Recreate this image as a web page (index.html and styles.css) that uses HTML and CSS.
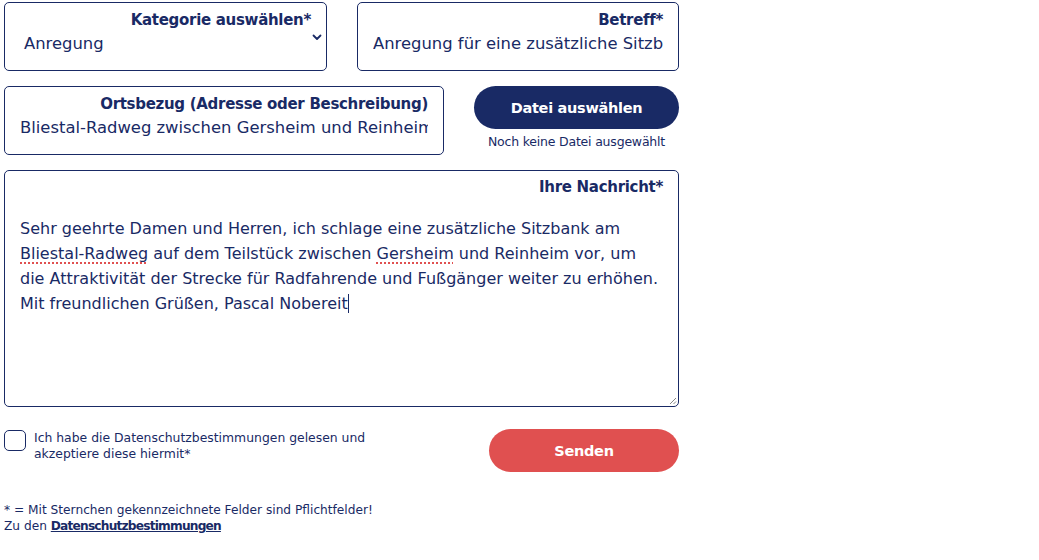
FILE: index.html
```html
<!DOCTYPE html>
<html lang="de">
<head>
<meta charset="utf-8">
<link rel="stylesheet" href="styles.css">
</head>
<body>
<form class="form">
  <div class="row-top">
    <div class="field field-select">
      <div class="label">Kategorie auswählen*</div>
      <div class="value">Anregung</div>
      <svg class="chev" width="10" height="7" viewBox="0 0 10 7"><path d="M1.5 1.5 L5 5 L8.5 1.5" fill="none" stroke="#192a65" stroke-width="1.8" stroke-linecap="round" stroke-linejoin="round"/></svg>
    </div>
    <div class="field">
      <div class="label">Betreff*</div>
      <div class="value clip">Anregung für eine zusätzliche Sitzbank am Bliestal-Radweg</div>
    </div>
  </div>
  <div class="row row-mid">
    <div class="field">
      <div class="label">Ortsbezug (Adresse oder Beschreibung)</div>
      <div class="value clip">Bliestal-Radweg zwischen Gersheim und Reinheim</div>
    </div>
    <div class="file">
      <button type="button" class="btn btn-navy">Datei auswählen</button>
      <div class="file-note">Noch keine Datei ausgewählt</div>
    </div>
  </div>
  <div class="field field-msg">
    <div class="label">Ihre Nachricht*</div>
    <div class="msg">Sehr geehrte Damen und Herren, ich schlage eine zusätzliche Sitzbank am <span class="spell">Bliestal-Radweg</span> auf dem Teilstück zwischen <span class="spell">Gersheim</span> und Reinheim vor, um die Attraktivität der Strecke für Radfahrende und Fußgänger weiter zu erhöhen. Mit freundlichen Grüßen, Pascal Nobereit<span class="caret"></span></div>
    <svg class="grip" width="8" height="8" viewBox="0 0 8 8"><path d="M7 1 L1 7 M7 4.5 L4.5 7" stroke="#888" stroke-width="1"/></svg>
  </div>
  <div class="row row-bottom">
    <label class="consent">
      <span class="box"></span>
      <span class="consent-text">Ich habe die Datenschutzbestimmungen gelesen und akzeptiere diese hiermit*</span>
    </label>
    <button type="button" class="btn btn-red">Senden</button>
  </div>
  <div class="foot">
    <div>* = Mit Sternchen gekennzeichnete Felder sind Pflichtfelder!</div>
    <div>Zu den <a class="foot-link" href="#">Datenschutzbestimmungen</a></div>
  </div>
</form>
</body>
</html>
```
FILE: styles.css
```css
* { box-sizing: border-box; }
body {
  margin: 0;
  background: #fff;
  color: #192a65;
  font-family: "DejaVu Sans", "Noto Sans", sans-serif;
}
.form {
  width: 679px;
  padding: 2px 0 0 4px;
}
.row { display: flex; }
.row-top {
  display: grid;
  grid-template-columns: 323px 322px;
  column-gap: 30px;
}
.row-top .field { min-width: 0; }
.field {
  position: relative;
  border: 1px solid #192a65;
  border-radius: 5px;
  height: 69px;
  padding: 6px 15px 0 15px;
  background: #fff;
}
.label {
  text-align: right;
  font-weight: bold;
  font-size: 15px;
  line-height: 22px;
  letter-spacing: -0.3px;
}
.value {
  font-size: 16.4px;
  line-height: 26px;
  white-space: nowrap;
}
.clip { overflow: hidden; }
.field-select { padding-left: 19px; }
.field-select .chev { position: absolute; right: 4px; top: 31px; }
.row-mid { margin-top: 15px; gap: 30px; align-items: flex-start; }
.row-mid .field { width: 440px; flex: none; }
.file { flex: 1; display: flex; flex-direction: column; align-items: center; }
.btn {
  border: 0;
  border-radius: 22px;
  height: 43px;
  color: #fff;
  font-family: inherit;
  font-weight: bold;
  font-size: 14.5px;
  letter-spacing: -0.3px;
  cursor: pointer;
}
.btn-navy { background: #192a65; width: 100%; }
.file-note { font-size: 12.5px; margin-top: 5px; letter-spacing: -0.2px; }
.field-msg {
  margin-top: 15px;
  height: 237px;
  padding-top: 5px;
}
.msg {
  margin-top: 18px;
  font-size: 16px;
  line-height: 25px;
}
.spell {
  text-decoration: underline dotted #e05050;
  text-decoration-thickness: 2px;
  text-underline-offset: 3px;
}
.caret {
  display: inline-block;
  width: 1px;
  height: 19px;
  background: #192a65;
  vertical-align: -4px;
}
.grip { position: absolute; right: 1px; bottom: 1px; }
.row-bottom { margin-top: 22px; justify-content: space-between; align-items: flex-start; }
.consent { display: flex; gap: 8px; padding-top: 1px; }
.box {
  flex: none;
  width: 22px;
  height: 21px;
  border: 1px solid #192a65;
  border-radius: 5px;
}
.consent-text {
  width: 345px;
  font-size: 12.4px;
  line-height: 16px;
}
.btn-red { background: #e05050; width: 190px; }
.foot {
  margin-top: 30px;
  font-size: 12.2px;
  line-height: 16px;
}
.foot-link {
  color: #192a65;
  font-weight: bold;
  text-decoration: underline;
  letter-spacing: -0.8px;
}
```
